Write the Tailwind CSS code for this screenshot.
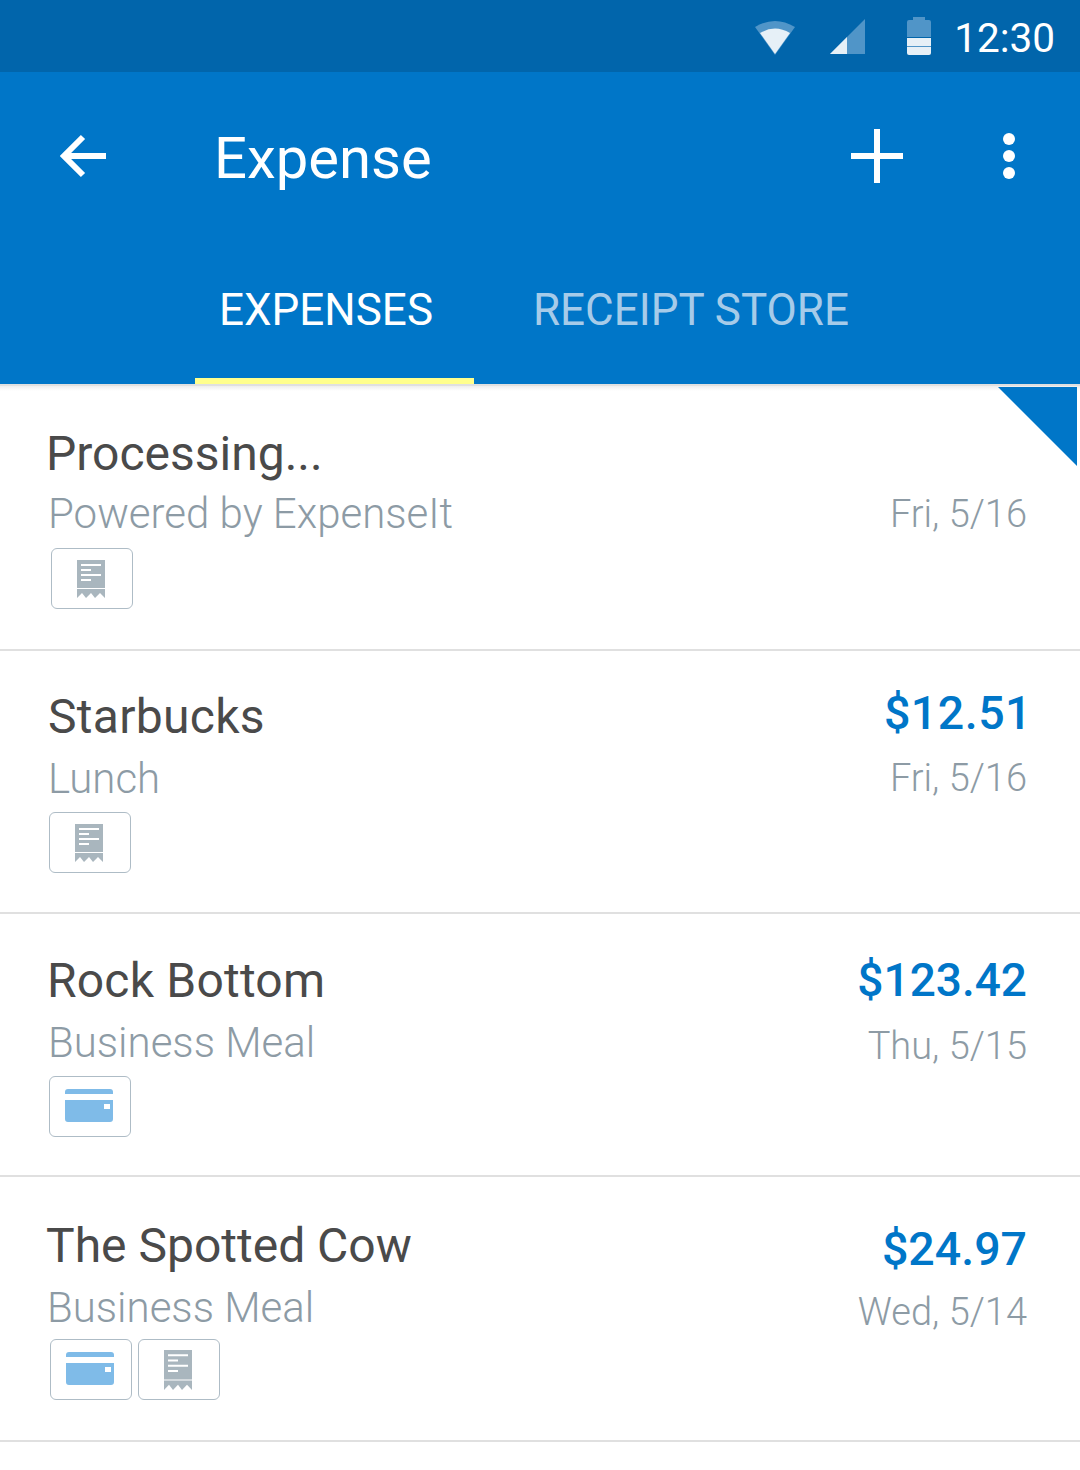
<!DOCTYPE html>
<html lang="en">
<head>
    <meta charset="UTF-8">
    <title>Expense</title>
    <script src="https://cdn.jsdelivr.net/npm/@tailwindcss/browser@4"></script>
</head>
<body class="bg-white w-[1080px] h-[1470px] overflow-hidden font-['Roboto',sans-serif]">

    <!-- Status bar -->
    <div class="h-[72px] bg-[#0165ab] flex items-center justify-end pr-[25px]">
        <svg class="w-[40px] h-[36px] mr-[35px] mt-[1px]" viewBox="0 0 40 36">
            <path d="M0 8Q20 -4 40 8L20 36Z" fill="#5095c8"/>
            <path d="M5 14Q20 5 35 14L20 35Z" fill="#e6f0f7"/>
        </svg>
        <svg class="w-[35px] h-[35px] mr-[42px] mt-[1px]" viewBox="0 0 35 35">
            <path d="M35 0V35H0Z" fill="#5095c8"/>
            <path d="M17 18V35H0Z" fill="#e6f0f7"/>
        </svg>
        <svg class="w-[24px] h-[38px] mr-[23px]" viewBox="0 0 24 38">
            <path d="M6 0H18V3H22Q24 3 24 5V20H0V5Q0 3 2 3H6Z" fill="#5095c8"/>
            <path d="M0 21H24V36Q24 38 22 38H2Q0 38 0 36Z" fill="#e6f0f7"/>
            <rect y="29" width="24" height="1" fill="#5095c8"/>
        </svg>
        <span class="mt-[4px] text-white text-[40.5px] leading-none">12:30</span>
    </div>

    <!-- App header -->
    <header class="h-[312px] bg-[#0076c8] flex flex-col">
        <div class="h-[170px] flex items-center">
            <svg class="w-[48px] h-[44px] ml-[60px] mb-[3px]" viewBox="0 0 48 44" fill="none" stroke="#fff" stroke-width="6">
                <path d="M46 22H5M23 3L4 22L23 41"/>
            </svg>
            <h1 class="ml-[106px] mt-[2px] text-white text-[58px] leading-none">Expense</h1>
            <svg class="w-[52px] h-[54px] ml-[419px] mb-[3px]" viewBox="0 0 52 54" fill="#fff">
                <rect x="23" width="6" height="54"/>
                <rect y="24" width="52" height="6"/>
            </svg>
            <div class="ml-[100px] mb-[3px] flex flex-col gap-[5px]">
                <span class="block w-[12px] h-[12px] rounded-full bg-white"></span>
                <span class="block w-[12px] h-[12px] rounded-full bg-white"></span>
                <span class="block w-[12px] h-[12px] rounded-full bg-white"></span>
            </div>
        </div>
        <nav class="flex-1 flex ml-[195px]">
            <div class="w-[279px] h-full relative pl-[24px] pt-[46px] text-white text-[44px] leading-none">
                EXPENSES
                <span class="absolute left-0 right-0 bottom-0 h-[6px] bg-[#ffff8d]"></span>
            </div>
            <div class="ml-[59px] pt-[46px] text-[#a6cbe9] text-[44px] leading-none">RECEIPT STORE</div>
        </nav>
    </header>
    <div class="h-[2px] bg-[#e0e0e0]"></div>

    <main>
        <!-- Processing -->
        <article class="relative h-[265px] border-b-2 border-[#e0e0e0] flex justify-between pl-[46px] pr-[53px]">
            <span class="absolute top-0 left-0 right-0 h-[5px] bg-linear-to-b from-[#eeeeee] to-white"></span>
            <div>
                <h2 class="mt-[42px] text-[48px] leading-[52px] text-[#4a4a4a]">Processing...</h2>
                <p class="mt-[9px] ml-[2px] text-[42px] leading-[50px] font-light text-[#8d9ba5]">Powered by ExpenseIt</p>
                <div class="mt-[9px] ml-[5px] flex gap-[6px]">
                    <div class="w-[82px] h-[61px] border border-[#aebcc6] rounded-[6px] flex items-center justify-center">
                        <svg class="w-[28px] h-[38px] mr-[2px]" viewBox="0 0 28 38" fill="#a9b6be">
                            <path d="M0 0H28V28H0ZM4 4V6H24V4ZM4 9V11H14V9ZM4 14V16H24V14ZM4 19V21H14V19Z" fill-rule="evenodd"/>
                            <path d="M0 29H28V38L23 33L18 38L14 33L9 38L5 33L0 38Z"/>
                        </svg>
                    </div>
                </div>
            </div>
            <div class="text-right">
                <p class="mt-[103px] text-[38px] leading-[50px] font-light text-[#8d9ba5]">Fri, 5/16</p>
            </div>
            <svg class="absolute top-[1px] right-[3px] w-[79px] h-[79px]" viewBox="0 0 79 79">
                <path d="M0 0H79V79Z" fill="#0076c8"/>
            </svg>
        </article>

        <!-- Starbucks -->
        <article class="h-[263px] border-b-2 border-[#e0e0e0] flex justify-between pl-[48px] pr-[48px]">
            <div>
                <h2 class="mt-[40px] text-[48px] leading-[52px] tracking-[0.3px] text-[#4a4a4a]">Starbucks</h2>
                <p class="mt-[11px] text-[42px] leading-[50px] font-light text-[#8d9ba5]">Lunch</p>
                <div class="mt-[8px] ml-[1px] flex gap-[6px]">
                    <div class="w-[82px] h-[61px] border border-[#aebcc6] rounded-[6px] flex items-center justify-center">
                        <svg class="w-[28px] h-[38px] mr-[2px]" viewBox="0 0 28 38" fill="#a9b6be">
                            <path d="M0 0H28V28H0ZM4 4V6H24V4ZM4 9V11H14V9ZM4 14V16H24V14ZM4 19V21H14V19Z" fill-rule="evenodd"/>
                            <path d="M0 29H28V38L23 33L18 38L14 33L9 38L5 33L0 38Z"/>
                        </svg>
                    </div>
                </div>
            </div>
            <div class="text-right">
                <p class="mt-[36px] text-[46.5px] leading-[52px] tracking-[0.5px] font-medium text-[#0076c8]">$12.51</p>
                <p class="mt-[14px] mr-[5px] text-[38px] leading-[50px] font-light text-[#8d9ba5]">Fri, 5/16</p>
            </div>
        </article>

        <!-- Rock Bottom -->
        <article class="h-[263px] border-b-2 border-[#e0e0e0] flex justify-between pl-[47px] pr-[53px]">
            <div>
                <h2 class="mt-[41px] text-[48px] leading-[52px] tracking-[0.2px] text-[#4a4a4a]">Rock Bottom</h2>
                <p class="mt-[11px] ml-[1px] text-[42px] leading-[50px] font-light text-[#8d9ba5]">Business Meal</p>
                <div class="mt-[8px] ml-[2px] flex gap-[6px]">
                    <div class="w-[82px] h-[61px] border border-[#aebcc6] rounded-[6px] flex items-center justify-center">
                        <svg class="w-[48px] h-[33px] mr-[2px] mb-[2px]" viewBox="0 0 48 33" fill="#7fbbe8">
                            <path d="M3 0H45Q48 0 48 3V5H0V3Q0 0 3 0Z"/>
                            <path d="M0 11H48V30Q48 33 45 33H3Q0 33 0 30ZM39 15V20H45V15Z" fill-rule="evenodd"/>
                        </svg>
                    </div>
                </div>
            </div>
            <div class="text-right">
                <p class="mt-[40px] text-[46px] leading-[52px] font-medium text-[#0076c8]">$123.42</p>
                <p class="mt-[15px] text-[38px] leading-[50px] font-light text-[#8d9ba5]">Thu, 5/15</p>
            </div>
        </article>

        <!-- The Spotted Cow -->
        <article class="h-[265px] border-b-2 border-[#e0e0e0] flex justify-between pl-[46px] pr-[53px]">
            <div>
                <h2 class="mt-[43px] text-[48px] leading-[52px] text-[#4a4a4a]">The Spotted Cow</h2>
                <p class="mt-[11px] ml-[1px] text-[42px] leading-[50px] font-light text-[#8d9ba5]">Business Meal</p>
                <div class="mt-[6px] ml-[4px] flex gap-[6px]">
                    <div class="w-[82px] h-[61px] border border-[#aebcc6] rounded-[6px] flex items-center justify-center">
                        <svg class="w-[48px] h-[33px] mr-[2px] mb-[2px]" viewBox="0 0 48 33" fill="#7fbbe8">
                            <path d="M3 0H45Q48 0 48 3V5H0V3Q0 0 3 0Z"/>
                            <path d="M0 11H48V30Q48 33 45 33H3Q0 33 0 30ZM39 15V20H45V15Z" fill-rule="evenodd"/>
                        </svg>
                    </div>
                    <div class="w-[82px] h-[61px] border border-[#aebcc6] rounded-[6px] flex items-center justify-center">
                        <svg class="w-[28px] h-[40px] mr-[2px]" viewBox="0 0 28 38" preserveAspectRatio="none" fill="#a9b6be">
                            <path d="M0 0H28V28H0ZM4 4V6H24V4ZM4 9V11H14V9ZM4 14V16H24V14ZM4 19V21H14V19Z" fill-rule="evenodd"/>
                            <path d="M0 29H28V38L23 33L18 38L14 33L9 38L5 33L0 38Z"/>
                        </svg>
                    </div>
                </div>
            </div>
            <div class="text-right">
                <p class="mt-[46px] text-[46.5px] leading-[52px] font-medium text-[#0076c8]">$24.97</p>
                <p class="mt-[12px] text-[38px] leading-[50px] font-light text-[#8d9ba5]">Wed, 5/14</p>
            </div>
        </article>
    </main>

</body>
</html>
